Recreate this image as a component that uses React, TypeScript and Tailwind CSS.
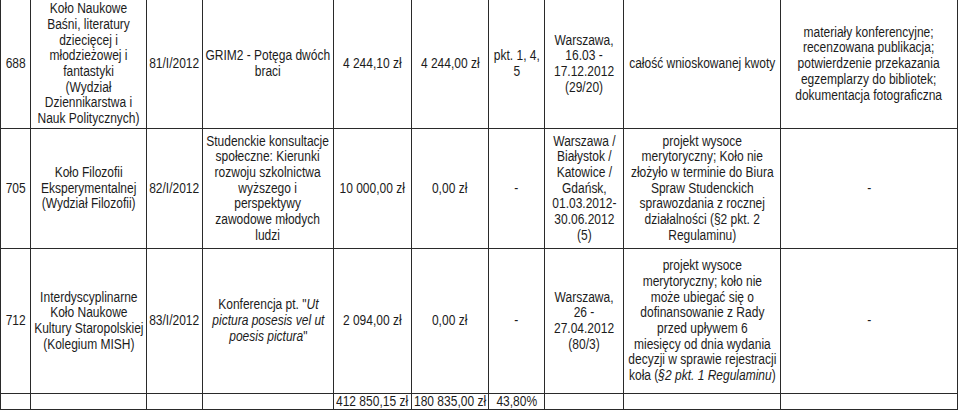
import type { ReactNode } from 'react'

type Row = ReactNode[][]

const rows: Row[] = [
  [
    ['688'],
    [
      'Koło Naukowe',
      'Baśni, literatury',
      'dziecięcej i',
      'młodzieżowej i',
      'fantastyki',
      '(Wydział',
      'Dziennikarstwa i',
      'Nauk Politycznych)',
    ],
    ['81/I/2012'],
    ['GRIM2 - Potęga dwóch', 'braci'],
    ['4 244,10 zł'],
    ['4 244,00 zł'],
    ['pkt. 1, 4,', '5'],
    ['Warszawa,', '16.03 -', '17.12.2012', '(29/20)'],
    ['całość wnioskowanej kwoty'],
    [
      'materiały konferencyjne;',
      'recenzowana publikacja;',
      'potwierdzenie przekazania',
      'egzemplarzy do bibliotek;',
      'dokumentacja fotograficzna',
    ],
  ],
  [
    ['705'],
    ['Koło Filozofii', 'Eksperymentalnej', '(Wydział Filozofii)'],
    ['82/I/2012'],
    [
      'Studenckie konsultacje',
      'społeczne: Kierunki',
      'rozwoju szkolnictwa',
      'wyższego i',
      'perspektywy',
      'zawodowe młodych',
      'ludzi',
    ],
    ['10 000,00 zł'],
    ['0,00 zł'],
    ['-'],
    ['Warszawa /', 'Białystok /', 'Katowice /', 'Gdańsk,', '01.03.2012-', '30.06.2012', '(5)'],
    [
      'projekt wysoce',
      'merytoryczny; Koło nie',
      'złożyło w terminie do Biura',
      'Spraw Studenckich',
      'sprawozdania z rocznej',
      'działalności (§2 pkt. 2',
      'Regulaminu)',
    ],
    ['-'],
  ],
  [
    ['712'],
    ['Interdyscyplinarne', 'Koło Naukowe', 'Kultury Staropolskiej', '(Kolegium MISH)'],
    ['83/I/2012'],
    [
      <>
        Konferencja pt. "<i>Ut</i>
      </>,
      <i>pictura posesis vel ut</i>,
      <>
        <i>poesis pictura</i>"
      </>,
    ],
    ['2 094,00 zł'],
    ['0,00 zł'],
    ['-'],
    ['Warszawa,', '26 -', '27.04.2012', '(80/3)'],
    [
      'projekt wysoce',
      'merytoryczny; koło nie',
      'może ubiegać się o',
      'dofinansowanie z Rady',
      'przed upływem 6',
      'miesięcy od dnia wydania',
      'decyzji w sprawie rejestracji',
      <>
        koła (<i>§2 pkt. 1 Regulaminu</i>)
      </>,
    ],
    ['-'],
  ],
  [[], [], [], [], ['412 850,15 zł'], ['180 835,00 zł'], ['43,80%'], [], [], []],
]

export default function App() {
  return (
    <div
      className="w-[960px] h-[410px] overflow-hidden bg-white text-[#1c1c1c] text-[14px] leading-[15.7px]"
      style={{ fontFamily: '"Liberation Sans", Arial, sans-serif' }}
    >
      <div className="grid grid-cols-[31px_116px_56px_131px_78px_77px_56px_79px_157px_177px] grid-rows-[129px_120px_145px_16px]">
        {rows.map((row, r) =>
          row.map((lines, c) => (
            <div
              key={`${r}-${c}`}
              className={`flex flex-col items-center justify-center text-center whitespace-nowrap border-b border-r border-[#2a2a2a] ${
                c === 0 ? 'border-l' : ''
              } ${r === 3 ? 'leading-[15px]' : ''}`}
            >
              <div className="flex flex-col items-center scale-x-[0.857]">
                {lines.map((line, i) => (
                  <div key={i}>{line}</div>
                ))}
              </div>
            </div>
          ))
        )}
      </div>
    </div>
  )
}
